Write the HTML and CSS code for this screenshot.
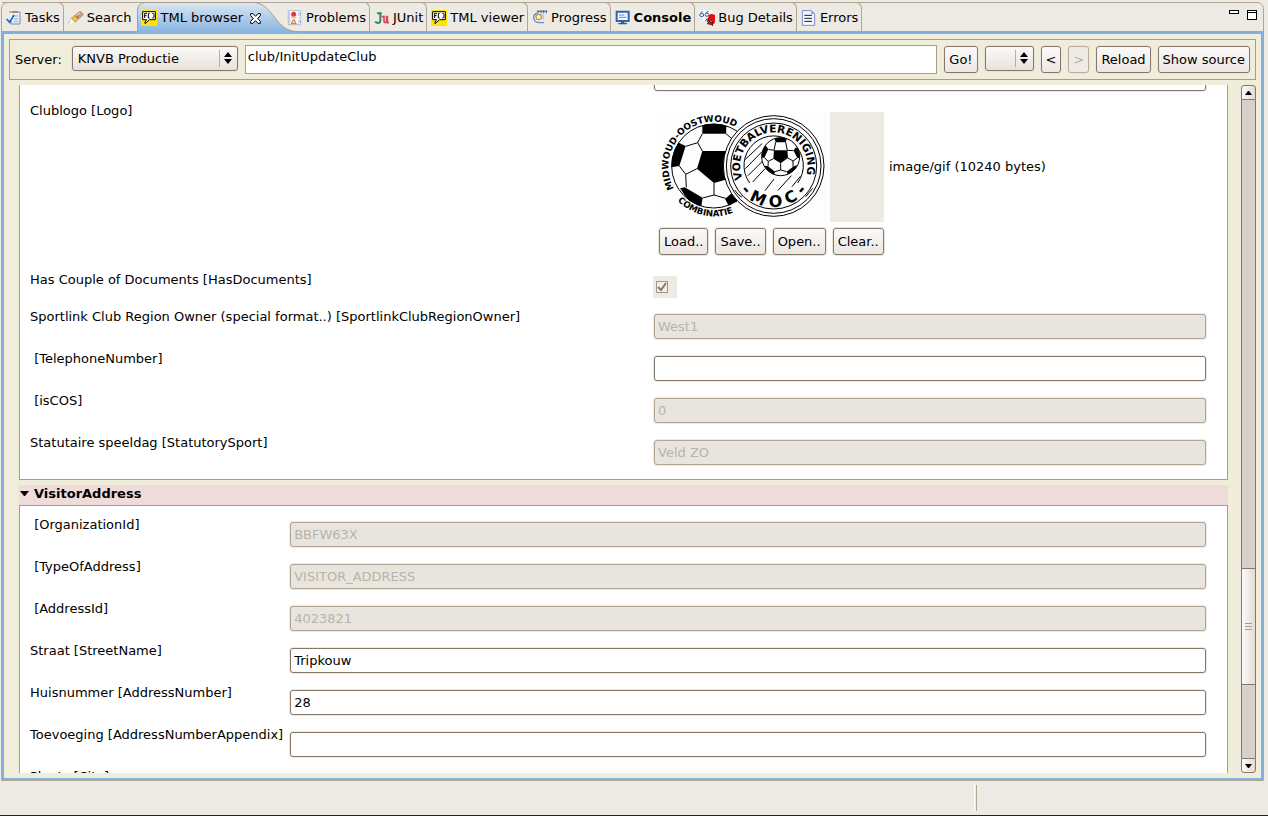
FILE: index.html
```html
<!DOCTYPE html>
<html lang="en">
<head>
<meta charset="utf-8">
<title>TML browser</title>
<link rel="stylesheet" href="styles.css">
</head>
<body>
<main class="folder">
  <header class="tabbar">
    <nav class="tabs" role="tablist">
      <button class="tab" role="tab">
        <svg class="icon" viewBox="18 27 48 48"><path d="M27 33H60V69H33V60" fill="#e8f1fa" stroke="#6b8cb8" stroke-width="3"/><path d="M36 30H54V36H36z" fill="#b98a4b"/><path d="M42 45H54M42 54H54M42 62H54" stroke="#8aa7cf" stroke-width="3"/><path d="M20 54L29 64L42 42" fill="none" stroke="#1565c8" stroke-width="5"/></svg>
        <span>Tasks</span>
      </button>
      <button class="tab before-active" role="tab">
        <svg class="icon" viewBox="204 27 48 48"><path d="M205 71L213 49L223 52L226 62z" fill="#fffbe0"/><path d="M205 70L214 49L221 51" fill="none" stroke="#b9b2a0" stroke-width="2"/><path d="M215 52L224 44L234 54L226 64z" fill="#f2c14e" stroke="#a7772f" stroke-width="2"/><path d="M225 43L240 31L250 40L236 54z" fill="#c9a587" stroke="#98633c" stroke-width="2"/><path d="M229 43L240 35" stroke="#f8ead9" stroke-width="3"/><path d="M231 49L237 44" stroke="#c43c30" stroke-width="3"/></svg>
        <span>Search</span>
      </button>
      <div class="tab active">
        <svg class="active-shape" viewBox="0 0 160 32" aria-hidden="true">
          <defs><linearGradient id="blue" x1="0" y1="0" x2="0" y2="1"><stop offset="0" stop-color="#dbe6f3"/><stop offset="1" stop-color="#83b1df"/></linearGradient></defs>
          <path d="M0 32V8Q1 1 8 0.5H116C136 0.5 138 29.500 160 29.500V32z" fill="url(#blue)"/>
          <path d="M0.500 30V8Q1 1 8 0.500H116C136 0.500 138 29.500 160 29.500" fill="none" stroke="#ab9f8a"/>
        </svg>
        <button class="tab-label" role="tab" aria-selected="true">
          <svg class="icon" viewBox="423 28 48 48"><path d="M423 28H471V76H423z" fill="#ffe600"/><path d="M428 33H466V57H449L435 69V64L440 57H428z" fill="#fff" stroke="#000" stroke-width="3"/><path d="M434 52V38H441M434 45H440M449 38H445V52H449M457 38H460L462 41V49L460 52H457" fill="none" stroke="#000" stroke-width="3"/></svg>
          <span>TML browser</span>
        </button>
        <button class="close" aria-label="Close"><svg viewBox="748 36 33 33"><path d="M750 38H757L764.500 46L772 38H779V44L771 52.500L779 61V67H772L764.500 59L757 67H750V61L758 52.500L750 44z" fill="#fff" stroke="#000" stroke-width="3"/></svg></button>
      </div>
      <button class="tab after-active" role="tab">
        <svg class="icon" viewBox="21 27 48 48"><path d="M25 29H62V47L58 51L62 56V71H25z" fill="#fff" stroke="#8d9fc4" stroke-width="2"/><path d="M29 33V67" stroke="#e3c7c9" stroke-width="4"/><circle cx="41" cy="40" r="7.500" fill="#e8323c"/><path d="M33 50H50" stroke="#8193b7" stroke-width="2"/><path d="M41 54L49 68H33z" fill="#ffd66b" stroke="#cc7b21" stroke-width="3"/><path d="M54 34L63 39L54 44M54 57L63 62L54 67" fill="#e1ebf8" stroke="#89a4ce" stroke-width="2"/></svg>
        <span>Problems</span>
      </button>
      <button class="tab" role="tab">
        <svg class="icon" viewBox="285 27 48 48"><path d="M294 37H308M304 37V58Q304 66 297 66Q291 66 289 61" fill="none" stroke="#2e8b57" stroke-width="6"/><path d="M308 47H315V58Q315 65 319 65Q323 64 323 58V47M320 47H325V65H330" fill="none" stroke="#dc4653" stroke-width="5"/></svg>
        <span>JUnit</span>
      </button>
      <button class="tab" role="tab">
        <svg class="icon" viewBox="423 28 48 48"><path d="M423 28H471V76H423z" fill="#ffe600"/><path d="M428 33H466V57H449L435 69V64L440 57H428z" fill="#fff" stroke="#000" stroke-width="3"/><path d="M434 52V38H441M434 45H440M449 38H445V52H449M457 38H460L462 41V49L460 52H457" fill="none" stroke="#000" stroke-width="3"/></svg>
        <span>TML viewer</span>
      </button>
      <button class="tab" role="tab">
        <svg class="icon" viewBox="747 27 48 48"><path d="M763 31H792" stroke="#3b66aa" stroke-width="3"/><path d="M765 27V37M774 27V37M782 27V37M790 27V37" stroke="#3b66aa" stroke-width="3"/><path d="M763 36Q751 40 752 51Q754 64 768 65H783" fill="none" stroke="#5d8cd0" stroke-width="4"/><path d="M778 39Q783 46 780 55" fill="none" stroke="#8bb1e0" stroke-width="3"/><circle cx="767" cy="48" r="8" fill="#fff3cf" stroke="#d0953f" stroke-width="4"/></svg>
        <span>Progress</span>
      </button>
      <button class="tab" role="tab">
        <svg class="icon" viewBox="69 27 48 48"><path d="M74 32H110V60H74z" fill="#f4f8ff" stroke="#2c66b1" stroke-width="6"/><path d="M81 42H97M81 49H103" stroke="#33537f" stroke-width="2"/><path d="M87 62H97V66H105V70H79V66H87z" fill="#2b579a"/></svg>
        <strong>Console</strong>
      </button>
      <button class="tab" role="tab">
        <svg class="icon" viewBox="330 27 48 48"><path d="M330 27H370V49H351V60H342V49H330z" fill="#fff"/><path d="M334 36L341 30M351 35L359 30" stroke="#345a88" stroke-width="3"/><ellipse cx="338" cy="42" rx="6" ry="5" fill="#e8f0f8" stroke="#345a88" stroke-width="3"/><ellipse cx="354" cy="41" rx="6" ry="5" fill="#e8f0f8" stroke="#345a88" stroke-width="3"/><path d="M360 42L368 38L378 42V65L370 72H360L354 61z" fill="#ee0d0d"/><path d="M349 59L355 54L362 60M354 69L361 64M366 59L363 67M370 64V75" fill="none" stroke="#222" stroke-width="3"/><circle cx="366" cy="61" r="4" fill="#8b8b8b" stroke="#222" stroke-width="2"/></svg>
        <span>Bug Details</span>
      </button>
      <button class="tab" role="tab">
        <svg class="icon" viewBox="627 27 48 48"><path d="M631 29H658L668 39V73H631z" fill="#f5f8ff" stroke="#6a75c9" stroke-width="2.500"/><path d="M658 29V39H668z" fill="#55a8e8"/><path d="M637 43H660M637 52H660M637 61H660" stroke="#1d1d1d" stroke-width="3"/></svg>
        <span>Errors</span>
      </button>
    </nav>
    <div class="window-controls">
      <button class="minimize" aria-label="Minimize"></button>
      <button class="maximize" aria-label="Maximize"></button>
    </div>
  </header>

  <div class="view">
    <form class="toolbar">
      <label class="server-label" for="server">Server:</label>
      <span class="combo server-combo"><select id="server"><option>KNVB Productie</option></select><svg viewBox="0 0 10 12" aria-hidden="true"><path d="M5 0L9 5H1zM5 12L9 7H1z"/></svg></span>
      <input class="address" type="text" aria-label="Service" value="club/InitUpdateClub">
      <button class="btn" type="button">Go!</button>
      <span class="combo small-combo"><select aria-label="History"><option></option></select><svg viewBox="0 0 10 12" aria-hidden="true"><path d="M5 0L9 5H1zM5 12L9 7H1z"/></svg></span>
      <button class="btn" type="button">&lt;</button>
      <button class="btn" type="button" disabled>&gt;</button>
      <button class="btn" type="button">Reload</button>
      <button class="btn" type="button">Show source</button>
    </form>

    <div class="scroller">
      <form class="content">
        <section class="panel club">
          <input class="field clipped" type="text" aria-label="Club field">
          <span class="label">Clublogo [Logo]</span>
          <div class="logo-cell">
            <div class="logo-row">
              <svg class="logo" viewBox="54 96 516 330" role="img" aria-label="MOC club logo">
                <defs>
                  <path id="arcMid" d="M102 326A136 136 0 1 1 357 250"/>
                  <path id="arcComb" d="M113 362A151 151 0 0 0 330 364"/>
                  <path id="arcVoet" d="M308 297A101 101 0 1 1 472 330"/>
                  <path id="arcMoc" d="M280 290A126 126 0 0 0 522 290"/>
                  <clipPath id="smallBall"><circle cx="422" cy="230" r="57"/></clipPath>
                  <clipPath id="bigBall"><circle cx="221" cy="258" r="127"/></clipPath>
                </defs>
                <path d="M54 96H570V426H54z" fill="#fdfdfd"/>
                <g clip-path="url(#bigBall)">
                  <path d="M187 213H262V298L222 309L171 266z"/>
                  <path d="M187 128H260L258 161H187z"/>
                  <path d="M90 190L107 184L137 198L118 258L94 262z"/>
                  <path d="M120 325L134 322L188 353L183 385H160z"/>
                  <path d="M255 357L272 342L320 350L270 385z"/>
                  <path d="M187 161L173 188L187 213M173 188L137 199M118 258L137 283L171 266M137 283L139 322M222 309V345L188 354M222 345L257 355M258 161L280 180" fill="none" stroke="#000" stroke-width="3"/>
                </g>
                <circle cx="221" cy="258" r="126" fill="none" stroke="#000" stroke-width="3"/>
                <g class="logo-text">
                  <text font-size="27"><textPath href="#arcMid">MIDWOUD-OOSTWOUD</textPath></text>
                  <text font-size="26"><textPath href="#arcComb">COMBINATIE</textPath></text>
                </g>
                <circle cx="401" cy="258" r="151" fill="#fdfdfd" stroke="#000" stroke-width="3"/>
                <circle cx="401" cy="258" r="142" fill="none" stroke="#000" stroke-width="3"/>
                <circle cx="401" cy="258" r="129" fill="none" stroke="#000" stroke-width="3"/>
                <path d="M329 309A89 89 0 1 1 473 309" fill="none" stroke="#000" stroke-width="3"/>
                <path d="M316 238L366 191M316 266L366 215M324 287L369 242M338 306L375 266M375 332L402 297M414 331L454 287M456 320L481 289M284 330Q294 345 306 352M518 325L497 350" stroke="#000" stroke-width="3" fill="none"/>
                <circle cx="422" cy="230" r="57" fill="#fdfdfd" stroke="#000" stroke-width="3"/>
                <g clip-path="url(#smallBall)">
                  <path d="M402 211H442L444 234L422 250L400 236z"/>
                  <path d="M402 171H442L437 187H407z"/>
                  <path d="M363 203L378 197L385 208L373 233H363z"/>
                  <path d="M481 203L466 203L461 212L472 234H481z"/>
                  <path d="M374 257L384 259L405 275L400 290L380 280z"/>
                  <path d="M470 255L459 260L440 275L446 290L466 280z"/>
                  <path d="M407 187L402 211L385 208M437 187L442 211L461 212M400 236L385 244L373 233M385 244L384 259M422 250V270L405 275M422 270L440 275M444 234L459 243L472 234M459 243V260" fill="none" stroke="#000" stroke-width="3"/>
                </g>
                <g class="logo-text">
                  <text font-size="32"><textPath href="#arcVoet">VOETBALVERENIGING</textPath></text>
                  <text font-size="48" text-anchor="middle"><textPath href="#arcMoc" startOffset="50%">- M O C -</textPath></text>
                </g>
              </svg>
              <div class="logo-rest"></div>
              <span class="mime">image/gif (10240 bytes)</span>
            </div>
            <div class="logo-buttons">
              <button class="btn" type="button">Load..</button>
              <button class="btn" type="button">Save..</button>
              <button class="btn" type="button">Open..</button>
              <button class="btn" type="button">Clear..</button>
            </div>
          </div>
          <label class="label" for="docs">Has Couple of Documents [HasDocuments]</label>
          <span class="check-well"><input id="docs" type="checkbox" checked disabled><svg viewBox="0 0 12 12" aria-hidden="true"><path d="M2 6L5 9L10 2"/></svg></span>
          <label class="label" for="region">Sportlink Club Region Owner (special format..) [SportlinkClubRegionOwner]</label>
          <input class="field" id="region" type="text" value="West1" disabled>
          <label class="label" for="tel">&nbsp;[TelephoneNumber]</label>
          <input class="field" id="tel" type="text">
          <label class="label" for="cos">&nbsp;[isCOS]</label>
          <input class="field" id="cos" type="text" value="0" disabled>
          <label class="label" for="day">Statutaire speeldag [StatutorySport]</label>
          <input class="field" id="day" type="text" value="Veld ZO" disabled>
        </section>

        <h2 class="section-title"><svg viewBox="0 0 9 5" aria-hidden="true"><path d="M0 0H9L5 5H4z"/></svg>VisitorAddress</h2>
        <section class="panel address-panel">
          <label class="label" for="org">&nbsp;[OrganizationId]</label>
          <input class="field" id="org" type="text" value="BBFW63X" disabled>
          <label class="label" for="type">&nbsp;[TypeOfAddress]</label>
          <input class="field" id="type" type="text" value="VISITOR_ADDRESS" disabled>
          <label class="label" for="aid">&nbsp;[AddressId]</label>
          <input class="field" id="aid" type="text" value="4023821" disabled>
          <label class="label" for="street">Straat [StreetName]</label>
          <input class="field" id="street" type="text" value="Tripkouw">
          <label class="label" for="num">Huisnummer [AddressNumber]</label>
          <input class="field" id="num" type="text" value="28">
          <label class="label" for="app">Toevoeging [AddressNumberAppendix]</label>
          <input class="field" id="app" type="text">
          <label class="label" for="city">Plaats [City]</label>
          <input class="field" id="city" type="text">
        </section>
      </form>
      <div class="scrollbar">
        <button class="arrow up" aria-label="Scroll up"><svg viewBox="0 0 7 4"><path d="M3 0H4L7 4H0z"/></svg></button>
        <div class="trough-above"></div>
        <div class="thumb"><i></i><i></i><i></i></div>
        <div class="trough-below"></div>
        <button class="arrow down" aria-label="Scroll down"><svg viewBox="0 0 7 4"><path d="M0 0H7L4 4H3z"/></svg></button>
      </div>
    </div>
  </div>
</main>
<footer class="status"><span class="status-divider"></span></footer>
</body>
</html>
```
FILE: styles.css
```css
* { box-sizing: border-box; }

body {
  margin: 0;
  height: 100vh;
  display: flex;
  flex-direction: column;
  overflow: hidden;
  background: #ede9e3;
  color: #000;
  font: 13px/16px "DejaVu Sans", sans-serif;
}

button, input, select {
  font: inherit;
  color: inherit;
  margin: 0;
}

svg { display: block; }

/* Tab folder */
.folder {
  flex: 1;
  min-height: 0;
  display: flex;
  flex-direction: column;
  margin: 2px 4px 0 1px;
  border: 1px solid #b3a593;
  border-radius: 7px 7px 0 0;
}

.tabbar {
  flex: none;
  display: flex;
  justify-content: space-between;
  height: 29px;
  border-bottom: 1px solid #b3a593;
}

.tabs { display: flex; height: 28px; }

.tab {
  display: flex;
  align-items: center;
  gap: 3px;
  margin: -1px 0 0;
  padding: 2px 3px 0 4px;
  border: solid #b3a593;
  border-width: 1px 1px 0 0;
  border-radius: 0 6px 0 0;
  background: none;
  white-space: nowrap;
}

.before-active { padding-right: 5px; border-right: 0; border-radius: 0; }
.after-active { padding-left: 2px; }

.icon { flex: none; width: 16px; height: 16px; }

.active {
  position: relative;
  z-index: 1;
  gap: 7px;
  padding-right: 23px;
  border-color: transparent;
}

.active-shape {
  position: absolute;
  left: 0;
  top: -1px;
  width: 160px;
  height: 32px;
  z-index: -1;
}

.tab-label {
  display: flex;
  align-items: center;
  gap: 4px;
  padding: 0;
  border: 0;
  background: none;
}

.close { padding: 0; border: 0; background: none; }
.close svg { width: 11px; height: 11px; }

.window-controls {
  display: flex;
  align-items: flex-start;
  gap: 8px;
  padding: 7px 6px 0 0;
}

.minimize, .maximize {
  width: 10px;
  padding: 0;
  border: 1px solid #000;
  background: #fff;
}
.minimize { height: 4px; }
.maximize { height: 10px; box-shadow: inset 0 1px #fff, inset 0 2px #000; }

.view {
  flex: 1;
  min-height: 0;
  display: flex;
  flex-direction: column;
  gap: 5px;
  padding: 5px;
  border: 2px solid #83b1df;
  background: #f0eedb;
}

/* Toolbar */
.toolbar {
  flex: none;
  display: flex;
  align-items: flex-start;
  gap: 7px;
  padding: 5px;
  border: 1px solid #a89d88;
}

.server-label { align-self: center; margin-right: 3px; }

.btn {
  height: 27px;
  margin-top: 1px;
  padding: 0 4px;
  border: 1px solid #85786a;
  border-radius: 3px;
  background: linear-gradient(#fbfaf9, #ebe7e2);
  box-shadow: 0 0 0 1px #e9e5da;
  white-space: nowrap;
}
.btn:disabled { color: #b5ab9e; border-color: #b9ad9d; background: #eeebe5; }

.combo { position: relative; margin-top: 1px; }
.combo select {
  display: block;
  width: 100%;
  height: 25px;
  padding: 0 5px;
  border: 1px solid #85786a;
  border-radius: 3px;
  background: linear-gradient(#fbfaf9, #e6e1db);
  box-shadow: 0 0 0 1px #e6e2d6;
  appearance: none;
}
.combo svg {
  position: absolute;
  right: 5px;
  top: 6px;
  width: 10px;
  height: 12px;
}
.combo::after {
  content: "";
  position: absolute;
  right: 18px;
  top: 4px;
  height: 17px;
  border-left: 1px solid #b9ad9d;
}
.server-combo { width: 166px; }
.small-combo { width: 49px; }

.address {
  flex: 1;
  min-width: 0;
  height: 29px;
  padding: 0 2px 6px;
  border: 1px solid #a89d88;
  background: #fff;
}

/* Scrolled form */
.scroller { flex: 1; min-height: 0; display: flex; }

.content {
  flex: 1;
  min-width: 0;
  overflow: hidden;
  padding: 0 10px;
}

.panel {
  display: grid;
  align-items: start;
  padding: 0 21px 0 10px;
  border: 1px solid #a89d88;
  background: #fff;
}
.club {
  grid-template-columns: minmax(0, 624fr) minmax(0, 552fr);
  padding-bottom: 3px;
  border-top: 0;
}
.address-panel {
  grid-template-columns: max-content 1fr;
  column-gap: 7px;
  padding-top: 10px;
}

.label { padding-top: 1px; white-space: nowrap; }

.field {
  width: 100%;
  height: 25px;
  margin: 6px 0 11px;
  padding: 0 3px;
  border: 1px solid #85786a;
  border-radius: 3px;
  background: #fff;
  box-shadow: 0 0 0 1px #ede9e3;
}
.field:disabled { color: #b9b3a8; border-color: #b3a593; background: #e8e5de; }
.clipped { grid-column: 2; margin: -19px 0 11px; }

.logo-cell { padding: 10px 0 16px 4px; }
.logo-row { display: flex; }
.logo { width: 172px; height: 110px; }
.logo-text { font-family: "DejaVu Sans", sans-serif; font-weight: bold; }
.logo-rest { width: 54px; background: #ede9e3; }
.mime { align-self: center; margin-left: 5px; }
.logo-buttons { display: flex; gap: 7px; padding: 5px 0 0 1px; }

.check-well {
  position: relative;
  width: 24px;
  height: 22px;
  margin: 5px 0 10px -1px;
  padding: 5px 3px;
  background: #ede9e3;
}
.check-well input {
  display: block;
  width: 12px;
  height: 12px;
  border: 1px solid #a3978a;
  background: #f1eeea;
  appearance: none;
}
.check-well svg { position: absolute; left: 3px; top: 5px; width: 12px; height: 12px; }
.check-well path { fill: none; stroke: #85786a; stroke-width: 2; }

.section-title {
  display: flex;
  align-items: center;
  gap: 5px;
  height: 20px;
  margin: 5px 0 0;
  padding: 0 1px 3px;
  background: #f0dbdb;
  font: bold 13px/16px "DejaVu Sans", sans-serif;
}
.section-title svg { width: 9px; height: 5px; }

/* Scrollbar */
.scrollbar {
  flex: none;
  display: flex;
  flex-direction: column;
  width: 18px;
  border-left: 3px solid #ede9e3;
}
.arrow, .thumb {
  display: flex;
  align-items: center;
  justify-content: center;
  border: 1px solid #85786a;
  background: linear-gradient(90deg, #fbfaf9, #e3dcd3);
}
.arrow { flex: none; height: 15px; padding: 0; }
.arrow svg { width: 7px; height: 4px; }
.up { border-radius: 3px 3px 0 0; }
.down { border-radius: 0 0 3px 3px; }
.trough-above, .trough-below {
  border: solid #85786a;
  border-width: 0 1px;
  background: #d9d1c7;
}
.trough-above { flex: 469; }
.trough-below { flex: 73; }
.thumb { flex: 116; flex-direction: column; gap: 2px; }
.thumb i { width: 7px; height: 1px; background: #a89d88; }

/* Status line */
.status {
  flex: none;
  display: flex;
  justify-content: flex-end;
  height: 35px;
  padding: 4px 291px 4px 0;
  border-bottom: 1px solid #222;
}
.status-divider {
  width: 3px;
  border-left: 1px solid #fff;
  border-right: 1px solid #b3a593;
}
```
